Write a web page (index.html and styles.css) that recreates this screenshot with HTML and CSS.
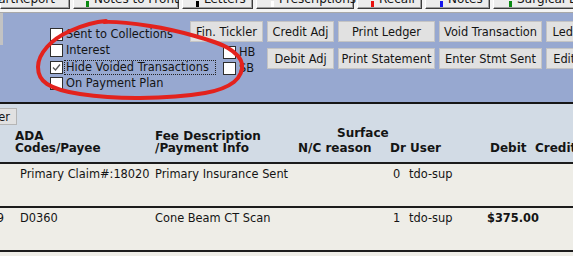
FILE: index.html
```html
<!DOCTYPE html>
<html>
<head>
<meta charset="utf-8">
<link rel="stylesheet" href="styles.css">
</head>
<body>
<div class="tabs">
  <div class="tab t1"><span class="tlbl">ChartReport</span></div>
  <div class="tab t2"><i class="mk green"></i><span class="tlbl">Notes to Front</span></div>
  <div class="tab t3"><i class="mk black"></i><span class="tlbl">Letters</span></div>
  <div class="tab t4"><i class="mk white"></i><span class="tlbl">Prescriptions</span></div>
  <div class="tab t5"><i class="mk red"></i><span class="tlbl">Recall</span></div>
  <div class="tab t6"><i class="mk blue"></i><span class="tlbl">Notes</span></div>
  <div class="tab t7"><i class="mk green"></i><span class="tlbl">Surgical Blog</span></div>
</div>
<div class="tabs-foot"></div>

<div class="panel">
  <div class="grip"></div>
  <div class="checks">
    <div class="chk"><span class="box"></span><span class="lbl">Sent to Collections</span></div>
    <div class="chk"><span class="box"></span><span class="lbl">Interest</span></div>
    <div class="chk"><span class="box"><svg width="11" height="11" viewBox="0 0 11 11"><polyline points="2,5.5 4.5,8 9,2.5" fill="none" stroke="#555" stroke-width="1.3"/></svg></span><span class="lbl focus">Hide Voided Transactions</span></div>
    <div class="chk"><span class="box"></span><span class="lbl">On Payment Plan</span></div>
  </div>
  <div class="fincol">
    <button class="btn fin">Fin. Tickler</button>
    <div class="small-checks">
      <div class="chk"><span class="box"></span><span class="lbl">HB</span></div>
      <div class="chk"><span class="box"></span><span class="lbl">SB</span></div>
    </div>
  </div>
  <div class="btngrid">
    <button class="btn">Credit Adj</button>
    <button class="btn">Print Ledger</button>
    <button class="btn">Void Transaction</button>
    <button class="btn">Ledger Options</button>
    <button class="btn">Debit Adj</button>
    <button class="btn">Print Statement</button>
    <button class="btn">Enter Stmt Sent</button>
    <button class="btn">Edit Statement</button>
  </div>
</div>

<div class="hdr">
  <div class="filter-clip"><button class="btn filter">Filter</button></div>
  <div class="cols">
    <div class="c0"></div>
    <div class="c1">ADA<br>Codes/Payee</div>
    <div class="c2">Fee Description<br>/Payment Info</div>
    <div class="c3"><div class="surface">Surface</div><div class="ncr">N/C reason</div></div>
    <div class="c4">Dr User</div>
    <div class="c5">Debit</div>
    <div class="c6">Credit</div>
  </div>
</div>

<div class="row">
  <div class="date"></div>
  <div class="b1">Primary Claim#:18020</div>
  <div class="b2">Primary Insurance Sent</div>
  <div class="b3"></div>
  <div class="b4"><span class="dr">0</span>tdo-sup</div>
  <div class="b5"></div>
  <div class="b6"></div>
</div>
<div class="row">
  <div class="date"><span>10/29/2019</span></div>
  <div class="b1">D0360</div>
  <div class="b2">Cone Beam CT Scan</div>
  <div class="b3"></div>
  <div class="b4"><span class="dr">1</span>tdo-sup</div>
  <div class="b5 money">$375.00</div>
  <div class="b6"></div>
</div>

<svg class="scribble" width="573" height="256" viewBox="0 0 573 256">
  <path d="M104 22 C117.3 21.2 134.8 23.7 150 26 C165.2 28.3 182 32.3 195 36 C208 39.7 220.2 43.3 228 48 C235.8 52.7 241 58.3 242 64 C243 69.7 240.2 77.2 234 82 C227.8 86.8 220.7 90.3 205 93 C189.3 95.7 160.8 97.8 140 98 C119.2 98.2 95.5 96.3 80 94 C64.5 91.7 54 88.5 47 84 C40 79.5 38 73.2 38 67 C38 60.8 41.7 53 47 47 C52.3 41 60.2 35.3 70 31 C79.8 26.7 92.7 21.8 106 21" fill="none" stroke="#e3221d" stroke-width="4" stroke-linecap="round" stroke-linejoin="round"/>
</svg>
</body>
</html>
```
FILE: styles.css
```css
* { box-sizing: border-box; }
html, body { margin: 0; padding: 0; overflow: hidden; }
body {
  width: 573px;
  height: 256px;
  position: relative;
  font-family: "DejaVu Sans", Verdana, sans-serif;
  font-size: 11.4px;
  color: #141414;
  background: #eeede7;
}

/* top tab strip (cut off) */
.tabs {
  display: flex;
  gap: 3px;
  height: 9px;
  align-items: flex-end;
  overflow: hidden;
  background: #f4f4f4;
}
.tab {
  flex: none;
  height: 20px;
  display: flex;
  align-items: center;
  padding-left: 12px;
  background: #ececec;
  border-left: 1px solid #ffffff;
  border-right: 1px solid #3c3c3c;
  border-bottom: 1px solid #3c3c3c;
  box-shadow: inset -1px -1px 0 #a0a0a0;
  font-size: 12px;
  white-space: nowrap;
}
.tlbl { line-height: 14px; }
.mk {
  flex: none;
  align-self: flex-end;
  width: 3px;
  height: 6px;
  margin-bottom: 1px;
  margin-right: 5px;
}
.mk.green { background: #0a8a12; }
.mk.black { background: #000; }
.mk.white { background: #fff; }
.mk.red { background: #e8110f; }
.mk.blue { background: #1515ee; }
.t1 { width: 70px; justify-content: flex-end; padding-right: 14px; padding-left: 0; }
.t2 { width: 106px; }
.t3 { width: 71px; padding-left: 13px; }
.t4 { width: 98px; padding-left: 14px; }
.t5 { width: 65px; padding-left: 13px; }
.t6 { width: 65px; padding-left: 14px; }
.t7 { width: 100px; padding-left: 15px; }
.tabs-foot {
  height: 4px;
  background: #f4f4f4;
  border-bottom: 1px solid #a9a9a9;
}

/* blue option panel */
.panel {
  display: flex;
  height: 91px;
  background: #97a8d0;
  border-bottom: 2px solid #161616;
}
.grip { flex: none; width: 3px; height: 32px; background: #c3c3c3; }
.checks { flex: none; width: 140px; margin-left: 47px; padding-top: 15px; }
.chk { display: flex; align-items: flex-start; height: 16.33px; }
.box {
  flex: none;
  width: 13px;
  height: 13px;
  background: #fff;
  border: 1px solid #2e2e2e;
  display: flex;
  align-items: center;
  justify-content: center;
}
.lbl { line-height: 13px; padding-left: 3px; white-space: nowrap; }
.lbl.focus {
  margin-left: 2px;
  padding-left: 1px;
  padding-right: 6px;
  outline: 1px dotted #222;
}
.fincol { flex: none; width: 73px; padding-top: 8px; }
.small-checks { padding-left: 33px; margin-top: 3.7px; }
.small-checks .chk { height: 16px; }

.btn {
  font-family: inherit;
  font-size: 11.4px;
  color: #141414;
  height: 21px;
  margin: 0;
  padding: 0;
  background: #e1e1e1;
  border: 1px solid #c4c4c4;
  border-radius: 0;
  display: flex;
  align-items: center;
  justify-content: center;
  white-space: nowrap;
  overflow: hidden;
}
.fin { width: 73px; }
.btngrid {
  flex: none;
  margin-left: 4px;
  padding-top: 8px;
  display: grid;
  grid-template-columns: 67px 97px 103px 100px;
  grid-auto-rows: 21px;
  column-gap: 4px;
  row-gap: 6px;
  align-content: start;
}
.btngrid .btn { width: 100%; }

/* column header band */
.hdr {
  height: 60px;
  background: #d2dbe5;
  border-bottom: 2px solid #1c1c1c;
  display: flex;
  flex-direction: column;
}
.filter-clip {
  width: 17px;
  height: 17px;
  margin-top: 4px;
  overflow: hidden;
  display: flex;
  justify-content: flex-end;
}
.filter { flex: none; height: 17px; padding: 0 6px 0 5px; border-color: #b5b5b5; }
.cols {
  margin-top: auto;
  padding-bottom: 8px;
  display: grid;
  grid-template-columns: 15px 140px 135px 98px 82px 62px 1fr;
  align-items: end;
  font-weight: bold;
  font-size: 12px;
  line-height: 12px;
  white-space: nowrap;
}
.surface { padding-left: 47px; margin-bottom: 3px; }
.ncr { padding-left: 8px; }
.c4 { padding-left: 2px; }
.c5 { padding-left: 20px; }
.c6 { padding-left: 3px; }

/* ledger rows */
.row {
  display: grid;
  grid-template-columns: 15px 140px 135px 98px 82px 62px 1fr;
  align-items: start;
  height: 44px;
  padding-top: 3.5px;
  line-height: 13px;
  border-bottom: 2px solid #1c1c1c;
  background: #eeede7;
  white-space: nowrap;
}
.date {
  display: flex;
  justify-content: flex-end;
  overflow: hidden;
  padding-right: 11px;
}
.date span { flex: none; }
.b1 { padding-left: 5px; }
.dr { display: inline-block; width: 21px; padding-left: 5px; }
.money { padding-left: 17px; font-weight: bold; }

.scribble { position: absolute; left: 0; top: 0; pointer-events: none; }
```
